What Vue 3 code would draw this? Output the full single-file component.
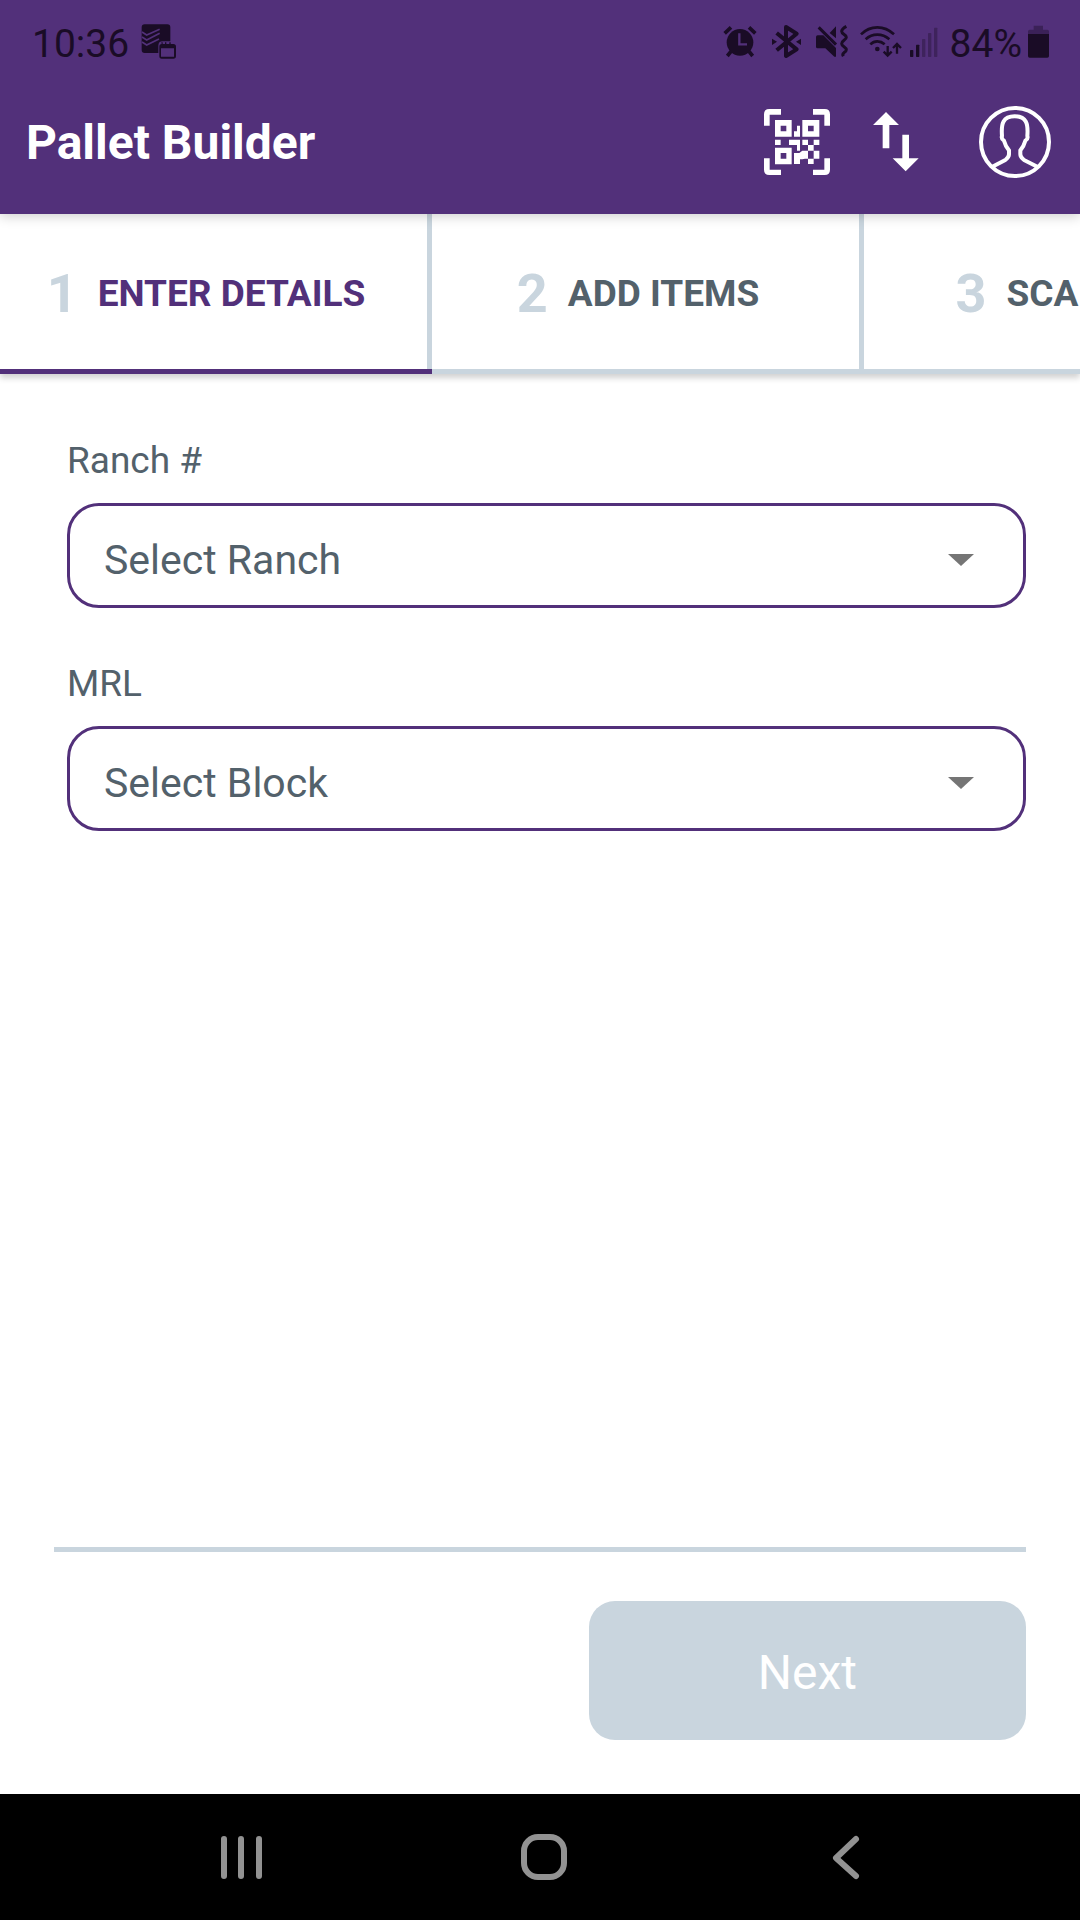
<script setup>
import { ref } from 'vue'

const steps = [
  { number: 1, label: 'ENTER DETAILS' },
  { number: 2, label: 'ADD ITEMS' },
  { number: 3, label: 'SCA' },
]
const active = ref(1)

const fields = [
  { id: 'ranch', label: 'Ranch #', placeholder: 'Select Ranch' },
  { id: 'mrl', label: 'MRL', placeholder: 'Select Block' },
]
</script>

<template>
  <div class="screen">
    <header class="header">
      <div class="status">
        <div class="status-left">
          <span>10:36</span>
          <svg width="36" height="40" viewBox="426 63 108 120" aria-hidden="true">
            <path fill="currentColor" d="M437 73h68q9 0 9 9v42h-23q-13 0-13 13v22h-41q-9 0-9-9V82q0-9 9-9z" />
            <path fill="none" stroke="#52307a" stroke-width="5" d="M429 96l14 9 39-17M429 111l14 9 39-20M429 126l14 9 37-18" />
            <path fill="currentColor" fill-rule="evenodd" d="M487 127h4v5h7v-5h4v5h9v-5h4v5h8q8 0 8 8v28q0 8-8 8h-35q-7 0-7-8v-28q0-8 7-8zM486 145v25h39v-25z" />
          </svg>
        </div>
        <div class="status-right">
          <svg width="39" height="40" viewBox="63 63 117 120" aria-hidden="true">
            <circle cx="117" cy="127" r="40" fill="currentColor" />
            <path fill="none" stroke="currentColor" stroke-width="11" d="M71 100l19-18M163 100l-19-18M90 154l-11 14M144 154l11 14" />
            <path fill="none" stroke="#52307a" stroke-width="7" d="M115 100v33h23" />
          </svg>
          <svg width="39" height="40" viewBox="198 63 117 120" aria-hidden="true">
            <path fill="none" stroke="currentColor" stroke-width="12" stroke-linejoin="round" d="M227 99l60 49-32 20V81l32 20-60 50" />
            <path fill="currentColor" d="M213 116l15 9-15 10zM300 116l-15 9 15 10z" />
          </svg>
          <svg width="39" height="40" viewBox="333 63 117 120" aria-hidden="true">
            <path fill="currentColor" d="M350 106h17l38 38v26h-5l-27-25h-23q-5 0-5-5v-29q0-5 5-5zM386 99l19-20v36z" />
            <path fill="none" stroke="currentColor" stroke-width="9" d="M353 82l52 52" />
            <path fill="none" stroke="currentColor" stroke-width="9" stroke-linejoin="round" d="M436 79q-14 8-14 15 0 5 7 9t7 9q0 4-7 9t-7 10q0 4 7 9t7 9q0 5-7 9-6 4-2 11" />
          </svg>
          <svg width="45" height="40" viewBox="468 63 135 120" aria-hidden="true">
            <path fill="none" stroke="currentColor" stroke-width="8" d="M480 103q21-21 49-21t50 21M494 118q15-14 35-14t36 14M508 133q9-9 21-9t22 9" />
            <circle cx="529" cy="147" r="7" fill="currentColor" />
            <path fill="none" stroke="currentColor" stroke-width="7" d="M560 138v27M548 155l12 12 12-12M588 161v-26M576 144l12-12 12 12" />
          </svg>
          <svg width="36" height="40" viewBox="621 63 108 120" fill="currentColor" aria-hidden="true">
            <rect x="627" y="150" width="10" height="21" rx="2" />
            <rect x="645" y="134" width="10" height="37" rx="2" />
            <g opacity=".35">
              <rect x="663" y="117" width="10" height="54" rx="2" />
              <rect x="681" y="99" width="10" height="72" rx="2" />
              <rect x="699" y="83" width="10" height="88" rx="2" />
            </g>
          </svg>
          <span>84%</span>
          <svg width="22" height="40" viewBox="984 63 66 120" fill="currentColor" aria-hidden="true">
            <path opacity=".4" d="M1001 77h28v12h13q5 0 5 5v8h-63v-8q0-5 5-5h12z" />
            <path d="M984 102h63v66q0 5-5 5h-53q-5 0-5-5z" />
          </svg>
        </div>
      </div>
      <div class="appbar">
        <h1>Pallet Builder</h1>
        <div class="actions">
          <button type="button" aria-label="Scan code">
            <svg width="66" height="66" viewBox="72 54 198 198" fill="#fff">
              <path fill-rule="evenodd" d="M72 104V70q0-16 16-16h35v17H89v33zM219 54h35q16 0 16 16v34h-17V71h-34zM72 202h17v34h34v16H88q-16 0-16-16zM253 202h17v34q0 16-16 16h-35v-16h34z" />
              <path fill-rule="evenodd" d="M105 87h50v50h-50zM122 104v17h17v-17zM187 87h51v50h-51zM204 104v17h17v-17zM105 170h50v50h-50zM122 186v17h17v-17z" />
              <path d="M162 121h9v-17h9v33h-18zM105 146h17v16h-17zM147 146h33v33h-9v-17h-24zM187 146h17v16h-17zM221 146h17v16h-17zM204 162h17v17h-17zM187 179h17v7h-17zM221 179h17v24h-17zM162 186h16l9-7h17v7h17-17v17h-9l-8 2h-7v14h-18zM204 203h17v16h-17z" />
            </svg>
          </button>
          <button type="button" aria-label="Sync">
            <svg width="46" height="60" viewBox="398 62 138 180" fill="#fff">
              <path d="M437 62l39 39h-29v70h-20v-70h-29zM486 130h20v71h29l-39 39-39-39h29z" />
            </svg>
          </button>
          <button type="button" aria-label="Profile">
            <svg width="72" height="72" viewBox="717 47 216 216" fill="none" stroke="#fff" stroke-width="12" stroke-linejoin="round">
              <circle cx="825" cy="155" r="102" />
              <path d="M757 229l39-20q11-8 11-17v-12c-7-8-12-18-15-29q-9-6-6-14c-3-37 3-59 38-59s41 22 38 59q3 8-6 14c-3 11-8 21-15 29v12q0 9 11 17l40 20" />
            </svg>
          </button>
        </div>
      </div>
    </header>

    <nav class="tabs" aria-label="Steps">
      <button
        v-for="step in steps"
        :key="step.number"
        type="button"
        class="tab"
        :class="{ active: step.number === active, partial: step.number === 3 }"
        @click="active = step.number"
      >
        <span class="number">{{ step.number }}</span>
        <span class="label">{{ step.label }}</span>
      </button>
    </nav>

    <main class="form">
      <div v-for="field in fields" :key="field.id" class="field">
        <label :for="field.id">{{ field.label }}</label>
        <div class="select">
          <select :id="field.id">
            <option>{{ field.placeholder }}</option>
          </select>
          <svg width="26" height="12" viewBox="0 0 26 12" aria-hidden="true">
            <path fill="#757575" d="M0 0h26L13 12z" />
          </svg>
        </div>
      </div>
    </main>

    <footer class="footer">
      <button type="button" class="next">Next</button>
    </footer>

    <nav class="system" aria-label="System">
      <button type="button" aria-label="Recents">
        <svg width="48" height="48" viewBox="0 0 48 48">
          <path d="M6 6v37M23 6v37M41 6v37" stroke-width="6" />
        </svg>
      </button>
      <button type="button" aria-label="Home">
        <svg width="48" height="48" viewBox="0 0 48 48">
          <rect x="4" y="4" width="40" height="40" rx="14" stroke-width="6" />
        </svg>
      </button>
      <button type="button" aria-label="Back">
        <svg width="48" height="48" viewBox="0 0 48 48">
          <path d="M34 6L14 25l20 18" stroke-width="6" />
        </svg>
      </button>
    </nav>
  </div>
</template>

<style>
body {
  margin: 0;
  background: #fff;
}
</style>

<style scoped>
.screen {
  display: flex;
  flex-direction: column;
  min-height: 100vh;
  overflow: hidden;
  font-family: Roboto, "Liberation Sans", sans-serif;
  color: #53616b;
}
button {
  padding: 0;
  border: 0;
  background: none;
  font: inherit;
  color: inherit;
}
svg {
  display: block;
  flex: none;
}
.header {
  position: relative;
  z-index: 2;
  background: #52307a;
  box-shadow: 0 2px 12px rgba(0, 0, 0, 0.2);
}
.status {
  display: flex;
  justify-content: space-between;
  align-items: center;
  height: 82px;
  padding: 0 30px 0 32px;
  box-sizing: border-box;
  color: #1a0c26;
  font-size: 39px;
  line-height: 44px;
}
.status-left,
.status-right {
  display: flex;
  align-items: center;
}
.status-left {
  gap: 12px;
}
.status-right {
  gap: 6px;
}
.status span {
  padding-top: 5px;
}
.appbar {
  display: flex;
  justify-content: space-between;
  align-items: center;
  height: 132px;
  padding: 0 29px 12px 26px;
  box-sizing: border-box;
}
h1 {
  margin: 0;
  padding-top: 2px;
  color: #fff;
  font-size: 48px;
  line-height: 56px;
  font-weight: 700;
}
.actions {
  display: flex;
  align-items: center;
}
.actions button + button {
  margin-left: 43px;
}
.actions button:last-child {
  margin-left: 60px;
}
.tabs {
  position: relative;
  z-index: 1;
  display: flex;
  overflow: hidden;
  background: #fff;
  box-shadow: 0 4px 6px rgba(0, 0, 0, 0.18);
}
.tab {
  display: flex;
  flex: 0 0 40%;
  justify-content: center;
  align-items: center;
  gap: 20px;
  height: 160px;
  padding: 4px 20px 0 0;
  box-sizing: border-box;
  background: linear-gradient(#c9d5de, #c9d5de) right / 5px 100% no-repeat;
  border-bottom: 5px solid #c9d5de;
}
.tab.active {
  border-bottom-color: #52307a;
}
.tab.active .label {
  color: #52307a;
}
.number {
  color: #c9d5de;
  font-size: 54px;
  line-height: 64px;
  font-weight: 700;
}
.label {
  font-size: 37px;
  line-height: 44px;
  font-weight: 700;
}
.partial .label {
  min-width: 178px;
  text-align: left;
}
.form {
  display: flex;
  flex: 1;
  flex-direction: column;
  gap: 54px;
  padding: 65px 54px 64px 67px;
}
.field {
  display: flex;
  flex-direction: column;
  gap: 20px;
}
.field label {
  font-size: 37px;
  line-height: 44px;
}
.select {
  display: grid;
  align-items: center;
}
.select > * {
  grid-area: 1 / 1;
}
.select svg {
  justify-self: end;
  margin: 8px 52px 0 0;
  pointer-events: none;
}
select {
  width: 100%;
  height: 105px;
  padding: 8px 80px 0 34px;
  box-sizing: border-box;
  appearance: none;
  border: 3px solid #52307a;
  border-radius: 32px;
  background: #fff;
  color: inherit;
  font: inherit;
  font-size: 41px;
}
.footer {
  display: flex;
  justify-content: flex-end;
  margin: 0 54px;
  padding: 49px 0 54px;
  border-top: 5px solid #c9d5de;
}
.next {
  width: 45%;
  height: 139px;
  padding-top: 4px;
  border-radius: 26px;
  background: #c9d5de;
  color: #fff;
  font-size: 48px;
}
.system {
  display: flex;
  justify-content: space-between;
  align-items: center;
  height: 126px;
  padding: 0 210px 0 218px;
  background: #000;
}
.system svg {
  fill: none;
  stroke: #929292;
  stroke-linecap: round;
  stroke-linejoin: round;
}
</style>
